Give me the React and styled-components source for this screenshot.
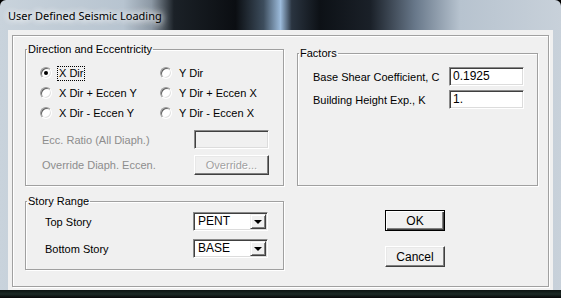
import styled, { createGlobalStyle } from "styled-components";

const GlobalStyle = createGlobalStyle`
  html, body {
    margin: 0;
    padding: 0;
    background: #000;
  }
  body {
    font-family: "Liberation Sans", Arial, sans-serif;
    font-size: 11px;
  }
`;

const Window = styled.div`
  width: 561px;
  height: 298px;
  display: flex;
  flex-direction: column;
  box-sizing: border-box;
  border-radius: 6px 6px 0 0;
  background:
    linear-gradient(180deg, transparent 0, transparent 290px, #0c1412 290px, #1c2a26 294px, #060808 298px),
    linear-gradient(90deg, #c9d3dc 0%, #b7c4d0 22%, #8c98a4 27%, #1b2127 31%, #0b0e12 42%, #3d4d5d 47%, #9cbbdb 50%, #2a3440 52%, #0d1116 57%, #1a2028 66%, #68788a 74%, #b7c3cf 82%, #c8d1da 100%);
`;

const TitleBar = styled.div`
  height: 30px;
  flex: none;
  display: flex;
  align-items: center;
  padding-left: 8px;
  font-family: "Noto Sans", "Open Sans", sans-serif;
  font-size: 11px;
  color: #000;
  text-shadow: 0 0 6px #fff, 0 0 8px rgba(255, 255, 255, 0.9), 0 0 10px rgba(255, 255, 255, 0.8);
`;

const Client = styled.div`
  flex: 1;
  margin: 0 8px 8px 8px;
  background: #f0f0f0;
  padding: 5px 4px 3px 4px;
  box-sizing: border-box;
  display: flex;
`;

const Inner = styled.div`
  flex: 1;
  box-sizing: border-box;
  border: 1px solid #a0a0a0;
  box-shadow: inset 1px 1px 0 #fff, 1px 1px 0 #fff;
  padding: 7px 0 0 12px;
  display: grid;
  grid-template-columns: 259px 241px;
  grid-template-rows: 143px auto;
  column-gap: 13px;
  row-gap: 9px;
  align-items: start;
`;

const Group = styled.fieldset`
  margin: ${(p) => (p.$offset ? `${p.$offset}px 0 0 0` : "0")};
  padding: 0 0 ${(p) => p.$bottom || 0}px 0;
  min-width: 0;
  box-sizing: border-box;
  height: ${(p) => (p.$h ? `${p.$h}px` : "auto")};
  border: 1px solid #a0a0a0;
  box-shadow: inset 1px 1px 0 #fff, 1px 1px 0 #fff;
`;

const Legend = styled.legend`
  margin-left: 1px;
  padding: 0 1px 0 1px;
  line-height: 13px;
  color: #000;
`;

const RadioGrid = styled.div`
  display: grid;
  grid-template-columns: 120px 1fr;
  grid-auto-rows: 20px;
  margin: 7px 0 0 14px;
`;

const RadioItem = styled.div`
  display: flex;
  align-items: center;
  gap: 6px;
`;

const RadioCircle = styled.span`
  position: relative;
  width: 12px;
  height: 12px;
  box-sizing: border-box;
  border-radius: 50%;
  border: 1px solid;
  border-color: #9a9a9a #ffffff #ffffff #9a9a9a;
  background: #fff;
  box-shadow: inset 1px 1px 0 #606060, inset -1px -1px 0 #e0e0e0;
  flex: none;

  &::after {
    content: "";
    display: ${(p) => (p.$checked ? "block" : "none")};
    position: absolute;
    left: 3px;
    top: 3px;
    width: 4px;
    height: 4px;
    border-radius: 50%;
    background: #000;
  }
`;

const RadioLabel = styled.span`
  line-height: 13px;
  padding: 0 1px;
  outline: ${(p) => (p.$focus ? "1px dotted #000" : "none")};
`;

const FieldRow = styled.div`
  display: flex;
  align-items: center;
  height: 19px;
  margin-top: ${(p) => p.$mt || 0}px;
`;

const FieldLabel = styled.span`
  width: ${(p) => p.$w}px;
  flex: none;
  color: ${(p) => (p.$disabled ? "#8d8d8d" : "#000")};
`;

const Rows = styled.div`
  margin: ${(p) => p.$m};
`;

const TextBox = styled.div`
  width: 75px;
  height: 19px;
  box-sizing: border-box;
  border: 1px solid;
  border-color: #8a8a8a #ffffff #ffffff #8a8a8a;
  box-shadow: inset 1px 1px 0 #404040, inset -1px -1px 0 #dcdcdc;
  background: ${(p) => (p.$disabled ? "#f0f0f0" : "#fff")};
  padding: 1px 0 0 3px;
  line-height: 15px;
  font-size: 12px;
  color: #000;
`;

const Button = styled.div`
  width: ${(p) => p.$w || 60}px;
  height: ${(p) => p.$h || 21}px;
  box-sizing: border-box;
  display: flex;
  align-items: center;
  justify-content: center;
  background: #f0f0f0;
  border: 1px solid;
  border-color: ${(p) => (p.$default ? "#000" : "#fff #404040 #404040 #fff")};
  box-shadow: ${(p) =>
    p.$default
      ? "inset 1px 1px 0 #fff, inset -1px -1px 0 #404040, inset -2px -2px 0 #808080"
      : "inset -1px -1px 0 #808080, inset 1px 1px 0 #e8e8e8"};
  color: ${(p) => (p.$disabled ? "#a0a0a0" : "#000")};
  text-shadow: ${(p) => (p.$disabled ? "1px 1px 0 #fff" : "none")};
  font-size: ${(p) => (p.$disabled ? 11 : 12)}px;
`;

const Combo = styled.div`
  width: 75px;
  height: 19px;
  box-sizing: border-box;
  border: 1px solid;
  border-color: #8a8a8a #ffffff #ffffff #8a8a8a;
  box-shadow: inset 1px 1px 0 #404040, inset -1px -1px 0 #dcdcdc;
  background: #fff;
  display: flex;
  align-items: stretch;
  padding: 1px;
`;

const ComboText = styled.span`
  flex: 1;
  padding-left: 3px;
  line-height: 15px;
  font-size: 12px;
`;

const ComboButton = styled.span`
  width: 16px;
  box-sizing: border-box;
  background: #f0f0f0;
  border: 1px solid;
  border-color: #f0f0f0 #404040 #404040 #f0f0f0;
  box-shadow: inset 1px 1px 0 #fff, inset -1px -1px 0 #808080;
  display: flex;
  align-items: center;
  justify-content: center;

  &::after {
    content: "";
    width: 0;
    height: 0;
    border-left: 4px solid transparent;
    border-right: 4px solid transparent;
    border-top: 4px solid #000;
    margin-top: 1px;
  }
`;

const ButtonColumn = styled.div`
  display: flex;
  flex-direction: column;
  gap: 15px;
  padding: 15px 0 0 88px;
`;

const radios = [
  ["X Dir", true],
  ["Y Dir", false],
  ["X Dir + Eccen Y", false],
  ["Y Dir + Eccen X", false],
  ["X Dir - Eccen Y", false],
  ["Y Dir - Eccen X", false],
];

const App = () => (
  <>
    <GlobalStyle />
    <Window>
      <TitleBar>User Defined Seismic Loading</TitleBar>
      <Client>
        <Inner>
          <Group $h={143}>
            <Legend>Direction and Eccentricity</Legend>
            <RadioGrid>
              {radios.map(([label, checked]) => (
                <RadioItem key={label}>
                  <RadioCircle $checked={checked} />
                  <RadioLabel $focus={checked}>{label}</RadioLabel>
                </RadioItem>
              ))}
            </RadioGrid>
            <Rows $m="7px 0 0 16px">
              <FieldRow>
                <FieldLabel $w={152} $disabled>Ecc. Ratio (All Diaph.)</FieldLabel>
                <TextBox $disabled />
              </FieldRow>
              <FieldRow $mt={6}>
                <FieldLabel $w={152} $disabled>Override Diaph. Eccen.</FieldLabel>
                <Button $w={75} $h={20} $disabled>Override...</Button>
              </FieldRow>
            </Rows>
          </Group>
          <Group $h={139} $offset={4}>
            <Legend>Factors</Legend>
            <Rows $m="7px 0 0 15px">
              <FieldRow>
                <FieldLabel $w={136}>Base Shear Coefficient, C</FieldLabel>
                <TextBox>0.1925</TextBox>
              </FieldRow>
              <FieldRow $mt={4}>
                <FieldLabel $w={136}>Building Height Exp., K</FieldLabel>
                <TextBox>1.</TextBox>
              </FieldRow>
            </Rows>
          </Group>
          <Group $bottom={11}>
            <Legend>Story Range</Legend>
            <Rows $m="4px 0 0 19px">
              <FieldRow>
                <FieldLabel $w={148}>Top Story</FieldLabel>
                <Combo>
                  <ComboText>PENT</ComboText>
                  <ComboButton />
                </Combo>
              </FieldRow>
              <FieldRow $mt={8}>
                <FieldLabel $w={148}>Bottom Story</FieldLabel>
                <Combo>
                  <ComboText>BASE</ComboText>
                  <ComboButton />
                </Combo>
              </FieldRow>
            </Rows>
          </Group>
          <ButtonColumn>
            <Button $default>OK</Button>
            <Button>Cancel</Button>
          </ButtonColumn>
        </Inner>
      </Client>
    </Window>
  </>
);

export default App;
